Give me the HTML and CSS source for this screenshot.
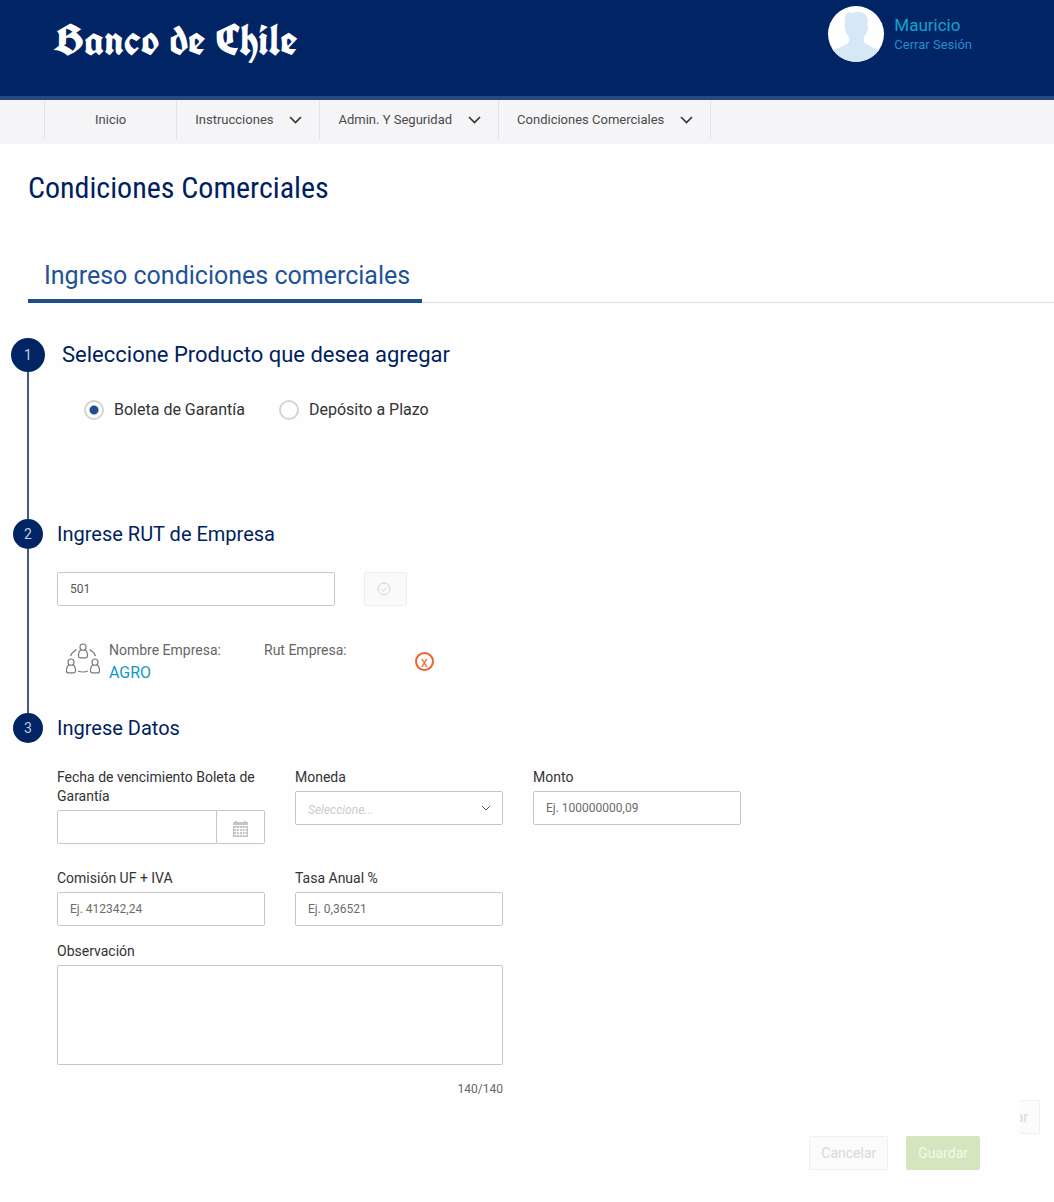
FILE: index.html
```html
<!DOCTYPE html>
<html lang="es">
<head>
<meta charset="utf-8">
<meta name="viewport" content="width=device-width, initial-scale=1">
<title>Banco de Chile - Condiciones Comerciales</title>
<link rel="stylesheet" href="styles.css">
</head>
<body>
<header class="header">
  <a class="brand" href="#">Banco de Chile</a>
  <div class="user">
    <svg class="avatar" viewBox="0 0 56 56" aria-hidden="true">
      <defs><clipPath id="disc"><circle cx="28" cy="28" r="28"/></clipPath></defs>
      <circle cx="28" cy="28" r="28" fill="#fff"/>
      <path clip-path="url(#disc)" fill="#d6e8f6" d="M18 8 Q20 5 24 7 Q31 4 37 8 Q41 12 39 19 Q41 20 40 23 Q38 29 36 31 Q35 36 37 37 Q40 40 51 44 L52 56 H4 L5 44 Q19 39 21 36 Q22 33 20 30 Q17 26 17 22 Q16 12 18 8Z"/>
    </svg>
    <div class="user-text">
      <span class="user-name">Mauricio</span>
      <a class="logout" href="#">Cerrar Sesión</a>
    </div>
  </div>
</header>
<nav class="nav">
  <a class="nav-item nav-home" href="#">Inicio</a>
  <a class="nav-item" href="#">Instrucciones <svg class="chevron" viewBox="0 0 13 8"><path d="M1 1l5.500 5.500L12 1"/></svg></a>
  <a class="nav-item" href="#">Admin. Y Seguridad <svg class="chevron" viewBox="0 0 13 8"><path d="M1 1l5.500 5.500L12 1"/></svg></a>
  <a class="nav-item" href="#">Condiciones Comerciales <svg class="chevron" viewBox="0 0 13 8"><path d="M1 1l5.500 5.500L12 1"/></svg></a>
</nav>
<main>
  <h1 class="title">Condiciones Comerciales</h1>
  <div class="tabs"><h2 class="tab">Ingreso condiciones comerciales</h2></div>

  <form class="steps">
    <section class="step">
      <div class="rail"><span class="marker marker-large">1</span></div>
      <div class="step-body step-product">
        <h3 class="step-title step-title-large">Seleccione Producto que desea agregar</h3>
        <div class="radios">
          <label class="radio"><input type="radio" name="producto" checked> Boleta de Garantía</label>
          <label class="radio"><input type="radio" name="producto"> Depósito a Plazo</label>
        </div>
      </div>
    </section>

    <section class="step">
      <div class="rail"><span class="marker">2</span></div>
      <div class="step-body step-company">
        <h3 class="step-title">Ingrese RUT de Empresa</h3>
        <div class="search">
          <input class="control" type="text" value="501" aria-label="RUT de Empresa">
          <button class="check" type="button" aria-label="Validar" disabled>
            <svg viewBox="0 0 14 14"><circle cx="7" cy="7" r="6"/><path d="M4.500 7.500l1.700 1.500L9.800 5.500"/></svg>
          </button>
        </div>
        <div class="company">
          <svg class="people" viewBox="0 0 34 32" aria-hidden="true">
            <g id="person"><path d="M15 6.500Q13.800 5.500 14 3.500Q14.500 1 17 1T20 3.500Q20.200 5.500 19 6.500Q17 8 15 6.500Q13 8 12.700 10.500L12.500 13Q12.500 14.800 14.300 14.800H19.700Q21.500 14.800 21.500 13L21.300 10.500Q21 8 19 6.500"/></g>
            <use href="#person" x="-12" y="15"/>
            <use href="#person" x="12" y="15"/>
            <path d="M10.500 6.500Q6 9 4.500 13M23.500 6.500Q28 9 29.500 13M12 28Q17 30 22 28"/>
          </svg>
          <div class="datum"><span class="datum-label">Nombre Empresa:</span><span class="datum-value">AGRO</span></div>
          <div class="datum"><span class="datum-label">Rut Empresa:</span></div>
          <button class="remove" type="button" aria-label="Quitar empresa">x</button>
        </div>
      </div>
    </section>

    <section class="step">
      <div class="rail rail-last"><span class="marker">3</span></div>
      <div class="step-body">
        <h3 class="step-title">Ingrese Datos</h3>
        <div class="fields">
          <div class="field">
            <label for="fecha">Fecha de vencimiento Boleta de Garantía</label>
            <div class="date">
              <input class="control" id="fecha" type="text">
              <button class="calendar" type="button" aria-label="Abrir calendario">
                <svg viewBox="0 0 15 16"><path d="M0 1h2V0h2v1h7V0h2v1h2v3H0z"/><path d="M0 5h15v11H0z"/><path class="calendar-grid" d="M1 7.500h13M1 10.500h13M1 13.500h13M3.500 6v9M6.500 6v9M9.500 6v9M12 6v9"/></svg>
              </button>
            </div>
          </div>
          <div class="field">
            <label for="moneda">Moneda</label>
            <div class="select">
              <select class="control" id="moneda"><option>Seleccione...</option></select>
              <svg viewBox="0 0 10 6"><path d="M1 1l4 4 4-4"/></svg>
            </div>
          </div>
          <div class="field">
            <label for="monto">Monto</label>
            <input class="control" id="monto" type="text" placeholder="Ej. 100000000,09">
          </div>
          <div class="field field-new-row">
            <label for="comision">Comisión UF + IVA</label>
            <input class="control" id="comision" type="text" placeholder="Ej. 412342,24">
          </div>
          <div class="field">
            <label for="tasa">Tasa Anual %</label>
            <input class="control" id="tasa" type="text" placeholder="Ej. 0,36521">
          </div>
        </div>
        <div class="field note">
          <label for="observacion">Observación</label>
          <textarea class="control" id="observacion"></textarea>
          <span class="counter">140/140</span>
        </div>
      </div>
    </section>

    <div class="overflow-row"><button class="button button-cut" type="button" disabled>ar</button></div>
    <div class="actions">
      <button class="button" type="button" disabled>Cancelar</button>
      <button class="button button-save" type="submit" disabled>Guardar</button>
    </div>
  </form>
</main>
</body>
</html>
```
FILE: styles.css
```css
* { box-sizing: border-box; }

body {
  margin: 0;
  background: #fefefe;
  color: #333;
  font: 14px/19px Roboto, sans-serif;
}

a { color: inherit; text-decoration: none; }
h1, h2, h3 { margin: 0; font-weight: 400; }
svg { display: block; flex: none; fill: none; }
input, select, textarea, button { font: inherit; margin: 0; }

/* Header */
.header {
  display: flex;
  justify-content: space-between;
  align-items: flex-start;
  height: 100px;
  padding: 6px 82px 0 53px;
  background: #002464;
  border-bottom: 4px solid #234b82;
}
.brand {
  padding-top: 10px;
  color: #fff;
  font: bold 44px/48px "Old English Text MT", "UnifrakturCook", "Liberation Serif", serif;
}
.user { display: flex; gap: 10px; }
.avatar { width: 56px; height: 56px; }
.user-text { display: flex; flex-direction: column; padding-top: 9px; }
.user-name { color: #12a5d1; font-size: 17px; line-height: 20px; }
.logout { color: #2a8ccc; font-size: 13px; }

/* Navigation */
.nav {
  display: flex;
  height: 44px;
  padding: 0 0 5px 44px;
  background: #f5f5f7;
}
.nav-item {
  display: flex;
  align-items: center;
  gap: 16px;
  padding: 0 17px 0 18px;
  border-left: 1px solid #e3e3e5;
  color: #4b4b4b;
  font-size: 13px;
}
.nav-home { padding: 0 50px; }
.nav-item:last-child { border-right: 1px solid #e3e3e5; }
.chevron { width: 13px; height: 8px; stroke: #333; stroke-width: 1.6; }

/* Titles */
.title {
  padding: 24px 28px 0;
  color: #001e60;
  font-family: "Roboto Condensed", Roboto, sans-serif;
  font-size: 30px;
  line-height: 40px;
}
.tabs {
  display: flex;
  margin: 50px 0 35px 28px;
  border-bottom: 1px solid #ddd;
}
.tab {
  margin-bottom: -1px;
  padding: 0 12px 5px 16px;
  border-bottom: 4px solid #1f4e8c;
  color: #1f5399;
  font-size: 25px;
  line-height: 36px;
}

/* Steps */
.step { display: flex; gap: 13px; padding-left: 12px; }
.rail {
  display: flex;
  flex-direction: column;
  align-items: center;
  flex: none;
  width: 32px;
}
.rail::after { content: ""; flex: 1; width: 2px; background: #44598c; }
.rail-last::after { display: none; }
.marker {
  display: flex;
  justify-content: center;
  align-items: center;
  width: 30px;
  height: 30px;
  border-radius: 50%;
  background: #002464;
  color: #c3cde0;
}
.marker-large { width: 34px; height: 34px; }
.step-body { flex: 1; min-width: 0; }
.step-product { padding: 0 0 99px 5px; }
.step-company { padding-bottom: 27px; }
.step-title { color: #001e60; font-size: 20px; line-height: 30px; }
.step-title-large { font-size: 22px; line-height: 34px; }

.radios { display: flex; gap: 34px; padding: 27px 0 0 22px; }
.radio { display: flex; align-items: center; gap: 10px; font-size: 16px; line-height: 21px; }
.radio input {
  appearance: none;
  width: 20px;
  height: 20px;
  border: 2px solid #d4d4d4;
  border-radius: 50%;
  background: #fff;
}
.radio input:checked { background: radial-gradient(circle, #1f4e8c 4px, #fff 5px); }

/* Controls */
.control {
  width: 100%;
  height: 34px;
  padding: 0 12px;
  border: 1px solid #c6c6c6;
  border-radius: 2px;
  background: #fff;
  color: #555;
  font-size: 12px;
}
.control::placeholder { color: #6c6c6c; opacity: 1; }

.search { display: flex; gap: 29px; padding-top: 23px; }
.search .control { width: 278px; }
.check {
  display: flex;
  align-items: center;
  width: 43px;
  padding: 0 12px;
  border: 1px solid #eee;
  border-radius: 2px;
  background: #fafafa;
}
.check svg { width: 14px; height: 14px; stroke: #d3d3d3; }

.company {
  display: grid;
  grid-template-columns: 43px 155px 151px 19px;
  align-items: start;
  padding: 35px 0 0 9px;
}
.people { width: 34px; height: 32px; margin-top: 2px; stroke: #777; stroke-width: 1.2; }
.datum { display: flex; flex-direction: column; }
.datum-label { color: #666; }
.datum-value { color: #1198c9; font-size: 16px; line-height: 26px; }
.remove {
  height: 19px;
  margin-top: 11px;
  padding: 1px 0 0;
  border: 2px solid #f0622d;
  border-radius: 50%;
  background: none;
  color: #f0622d;
  line-height: 14px;
}

.fields {
  display: grid;
  grid-template-columns: repeat(3, minmax(0, 208px));
  gap: 25px 30px;
  padding-top: 25px;
}
.field { display: flex; flex-direction: column; gap: 4px; }
.field-new-row { grid-column-start: 1; }
.date { display: flex; }
.date .control { flex: 1; min-width: 0; border-radius: 2px 0 0 2px; }
.calendar {
  display: flex;
  justify-content: center;
  align-items: center;
  width: 48px;
  padding: 4px 0 0;
  border: 1px solid #c6c6c6;
  border-left: 0;
  border-radius: 0 2px 2px 0;
  background: #fff;
}
.calendar svg { width: 15px; height: 16px; fill: #c4c4c4; }
.calendar-grid { stroke: #fff; }
.select { display: grid; align-items: center; }
.select > * { grid-area: 1 / 1; }
.select .control { appearance: none; padding-top: 4px; color: #ccc; font-style: italic; }
.select svg { justify-self: end; width: 10px; height: 6px; margin-right: 12px; stroke: #555; pointer-events: none; }
.note { max-width: 446px; padding-top: 16px; }
.note .control { height: 100px; resize: none; }
.counter { padding-top: 11px; align-self: flex-end; color: #666; font-size: 12px; }

/* Actions */
.button {
  display: flex;
  justify-content: center;
  align-items: center;
  height: 34px;
  padding: 0 11px;
  border: 1px solid #f0f0f0;
  border-radius: 2px;
  background: #fbfbfb;
  color: #d9d9d9;
}
.button-save { border-color: #d3e6bd; background: #d3e6bd; color: #f3f9ec; }
.button-cut {
  justify-content: flex-end;
  width: 20px;
  padding-left: 0;
  border-left: 0;
  overflow: hidden;
}
.overflow-row { display: flex; justify-content: flex-end; padding: 1px 14px 0; }
.actions { display: flex; justify-content: flex-end; gap: 18px; padding: 2px 74px 32px 12px; }
```
